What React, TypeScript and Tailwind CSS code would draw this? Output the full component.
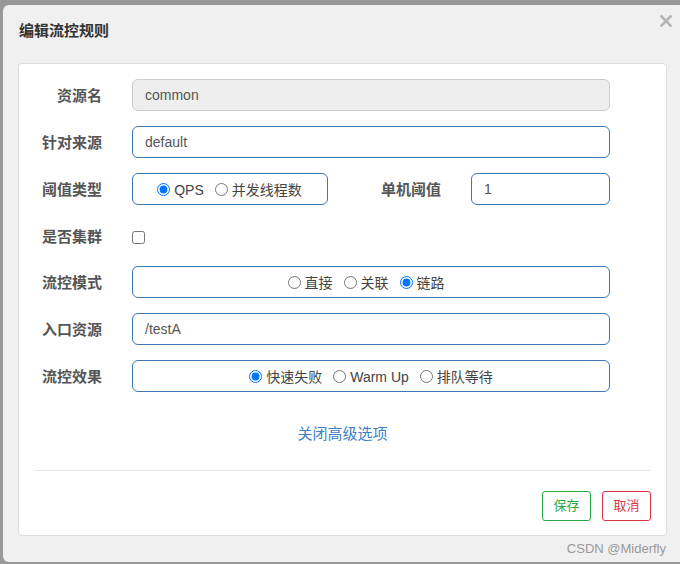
import React from 'react';

const inputBox =
  'h-[32px] rounded-[6px] border border-[#3a77b3] bg-white px-[12px] text-[14px] text-[#555] flex items-center';

function Radio({label, checked}: {label: string; checked?: boolean}) {
  return (
    <label className="flex items-center gap-[4px] text-[14px] text-[#444]">
      <input type="radio" defaultChecked={checked} className="w-[13px] h-[13px]" />
      <span className="pt-[3px]">{label}</span>
    </label>
  );
}

function Label({text, w = 'w-[83px]'}: {text: string; w?: string}) {
  return <span className={`${w} pt-[3px] text-right text-[15px] font-bold text-[#555] shrink-0`}>{text}</span>;
}

export default function App() {
  return (
    <div className="w-[680px] h-[564px] bg-[#999] pt-[5px] pl-[3px] pb-[2px] flex font-['Liberation_Sans','Noto_Sans_CJK_SC',sans-serif] overflow-hidden">
      <div className="relative flex-1 bg-[#f0f0f0] rounded-l-[6px] flex flex-col pl-[15px] pr-[13px]">
        <div className="h-[58px] pt-[16px] pl-[1px]">
          <h2 className="text-[15px] leading-[20px] font-bold text-[#333]">编辑流控规则</h2>
        </div>
        <button className="absolute top-[10px] right-[8px] p-[0px]">
          <svg width="12" height="12" viewBox="0 0 12 12">
            <path d="M1.5 1.5 L10.5 10.5 M10.5 1.5 L1.5 10.5" stroke="#b4b4b4" strokeWidth="2.6" strokeLinecap="square" />
          </svg>
        </button>

        <div className="h-[473px] bg-white border border-[#dcdcdc] rounded-[4px] flex flex-col pt-[15px]">
          <div className="flex flex-col gap-[15px]">
            <div className="flex items-center h-[32px]">
              <Label text="资源名" />
              <div className="ml-[30px] w-[478px] h-[32px] rounded-[6px] border border-[#cccccc] bg-[#eeeeee] px-[12px] text-[14px] text-[#555] flex items-center">
                common
              </div>
            </div>
            <div className="flex items-center h-[32px]">
              <Label text="针对来源" />
              <div className={`ml-[30px] w-[478px] ${inputBox}`}>default</div>
            </div>
            <div className="flex items-center h-[32px]">
              <Label text="阈值类型" />
              <div className="ml-[30px] w-[196px] h-[32px] rounded-[6px] border border-[#3a77b3] flex items-center justify-center gap-[11px] pl-[1px] pr-[2px]">
                <Radio label="QPS" checked />
                <Radio label="并发线程数" />
              </div>
              <Label text="单机阈值" w="w-[113px]" />
              <div className={`ml-[30px] w-[139px] ${inputBox}`}>1</div>
            </div>
            <div className="flex items-center h-[31px]">
              <Label text="是否集群" />
              <input type="checkbox" className="ml-[30px] mt-[4px] w-[13px] h-[13px]" />
            </div>
            <div className="flex items-center h-[32px]">
              <Label text="流控模式" />
              <div className="ml-[30px] w-[478px] h-[32px] rounded-[6px] border border-[#3a77b3] flex items-center justify-center gap-[11px] pr-[10px]">
                <Radio label="直接" />
                <Radio label="关联" />
                <Radio label="链路" checked />
              </div>
            </div>
            <div className="flex items-center h-[32px]">
              <Label text="入口资源" />
              <div className={`ml-[30px] w-[478px] ${inputBox}`}>/testA</div>
            </div>
            <div className="flex items-center h-[32px]">
              <Label text="流控效果" />
              <div className="ml-[30px] w-[478px] h-[32px] rounded-[6px] border border-[#3a77b3] flex items-center justify-center gap-[11px]">
                <Radio label="快速失败" checked />
                <Radio label="Warm Up" />
                <Radio label="排队等待" />
              </div>
            </div>
          </div>

          <div className="mt-[31px] flex justify-center">
            <a className="text-[15px] leading-[22px] text-[#3b7fc4] cursor-pointer">关闭高级选项</a>
          </div>

          <div className="mt-[25px] mx-[15px] border-t border-[#e5e5e5]" />

          <div className="mt-[20px] flex justify-end gap-[11px] pr-[15px]">
            <button className="w-[49px] h-[30px] rounded-[3px] border border-[#28a745] bg-white text-[13px] text-[#28a745]">
              保存
            </button>
            <button className="w-[49px] h-[30px] rounded-[3px] border border-[#dc3545] bg-white text-[13px] text-[#dc3545]">
              取消
            </button>
          </div>
        </div>

        <div className="flex justify-end pt-[5px] pr-[1px]">
          <span className="text-[13px] leading-[16px] text-[#9a9a9a]">CSDN @Miderfly</span>
        </div>
      </div>
    </div>
  );
}
